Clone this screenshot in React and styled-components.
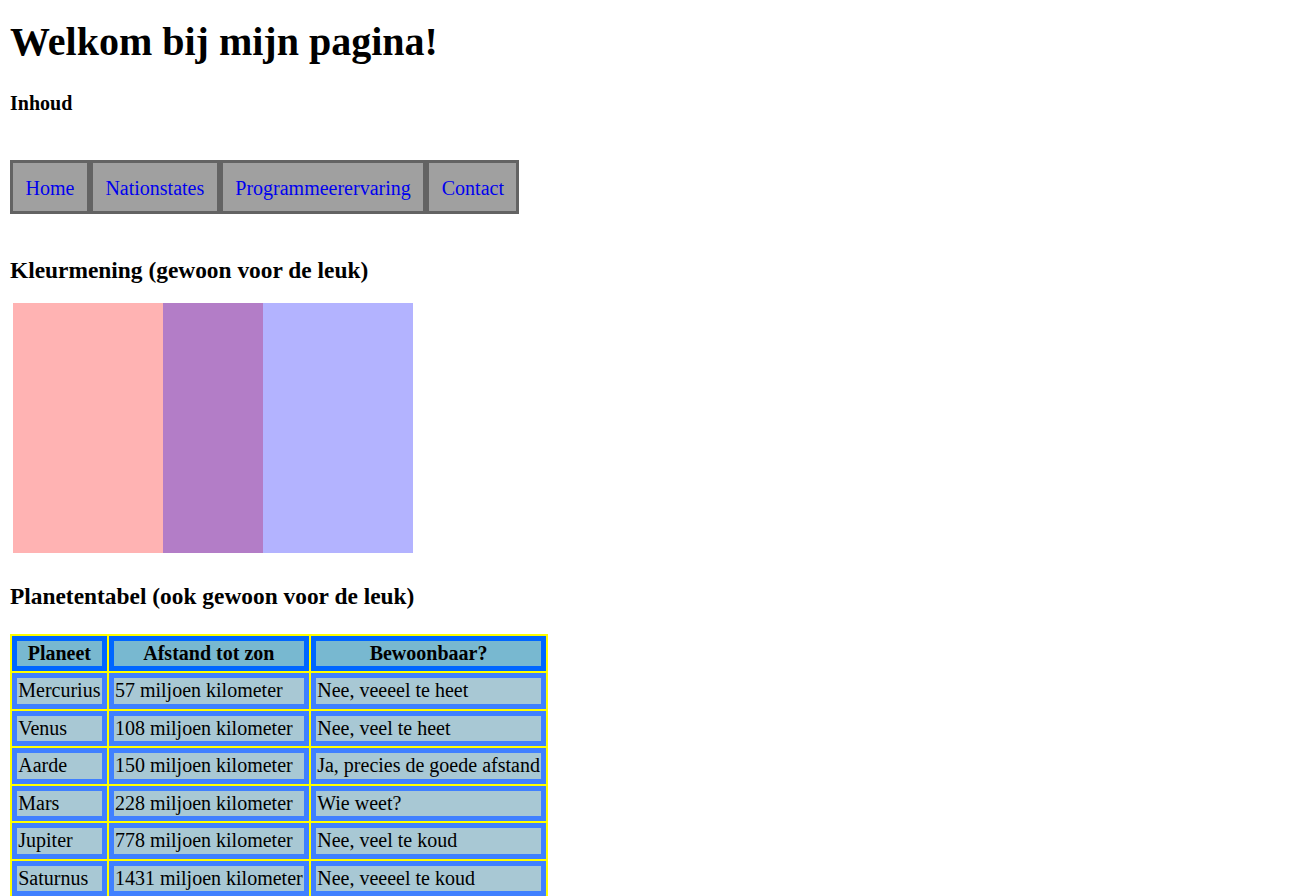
import React from "react";
import styled, { createGlobalStyle } from "styled-components";

const GlobalStyle = createGlobalStyle`
  html, body {
    margin: 0;
    padding: 0;
    background: #ffffff;
  }
  body {
    font-family: "Liberation Serif", "Times New Roman", serif;
    font-size: 20px;
    color: #000000;
  }
`;

const Page = styled.div`
  padding: 18.5px 10px 0;
`;

const Title = styled.h1`
  margin: 0;
  font-size: 40px;
  line-height: 46px;
  font-weight: bold;
`;

const Label = styled.div`
  margin-top: 27.25px;
  font-size: 20px;
  line-height: 23px;
  font-weight: bold;
`;

const Nav = styled.ul`
  display: flex;
  list-style: none;
  margin: 45.25px 0 0;
  padding: 0;
`;

const NavItem = styled.li`
  border: 3px solid #636363;
  background: #a0a0a0;
  padding: 13.5px 12.5px 11.5px;
  line-height: 23px;
`;

const NavLink = styled.a`
  color: #0000ee;
  text-decoration: none;
`;

const Heading = styled.h3`
  margin: ${(p) => p.$top}px 0 0;
  font-size: 23.4px;
  line-height: 27px;
  font-weight: bold;
`;

const Bars = styled.div`
  display: flex;
  margin: 18.7px 0 0 2.5px;
  height: 250px;
`;

const Bar = styled.div`
  width: ${(p) => p.$w}px;
  background: ${(p) => p.$color};
`;

const Table = styled.table`
  margin-top: 23.6px;
  border-collapse: separate;
  border-spacing: 2.5px;
  background: #ffff00;
`;

const Th = styled.th`
  border: 5px solid #0066ff;
  background: #78b8d0;
  padding: 1.25px;
  line-height: 23px;
  font-weight: bold;
  text-align: center;
`;

const Td = styled.td`
  border: 5px solid #4080ff;
  background: #a8c8d4;
  padding: 1.25px;
  line-height: 23px;
  text-align: left;
  white-space: nowrap;
`;

const links = ["Home", "Nationstates", "Programmeerervaring", "Contact"];

const planets = [
  ["Mercurius", "57 miljoen kilometer", "Nee, veeeel te heet"],
  ["Venus", "108 miljoen kilometer", "Nee, veel te heet"],
  ["Aarde", "150 miljoen kilometer", "Ja, precies de goede afstand"],
  ["Mars", "228 miljoen kilometer", "Wie weet?"],
  ["Jupiter", "778 miljoen kilometer", "Nee, veel te koud"],
  ["Saturnus", "1431 miljoen kilometer", "Nee, veeeel te koud"],
];

export default function App() {
  return (
    <Page>
      <GlobalStyle />
      <Title>Welkom bij mijn pagina!</Title>
      <Label>Inhoud</Label>

      <Nav>
        {links.map((l) => (
          <NavItem key={l}>
            <NavLink href="#">{l}</NavLink>
          </NavItem>
        ))}
      </Nav>

      <Heading $top={43.3}>Kleurmening (gewoon voor de leuk)</Heading>
      <Bars>
        <Bar $w={150} $color="#ffb3b3" />
        <Bar $w={100} $color="#b37dc7" />
        <Bar $w={150} $color="#b3b3ff" />
      </Bars>

      <Heading $top={30}>Planetentabel (ook gewoon voor de leuk)</Heading>
      <Table>
        <thead>
          <tr>
            <Th>Planeet</Th>
            <Th>Afstand tot zon</Th>
            <Th>Bewoonbaar?</Th>
          </tr>
        </thead>
        <tbody>
          {planets.map((row) => (
            <tr key={row[0]}>
              {row.map((cell) => (
                <Td key={cell}>{cell}</Td>
              ))}
            </tr>
          ))}
        </tbody>
      </Table>
    </Page>
  );
}
